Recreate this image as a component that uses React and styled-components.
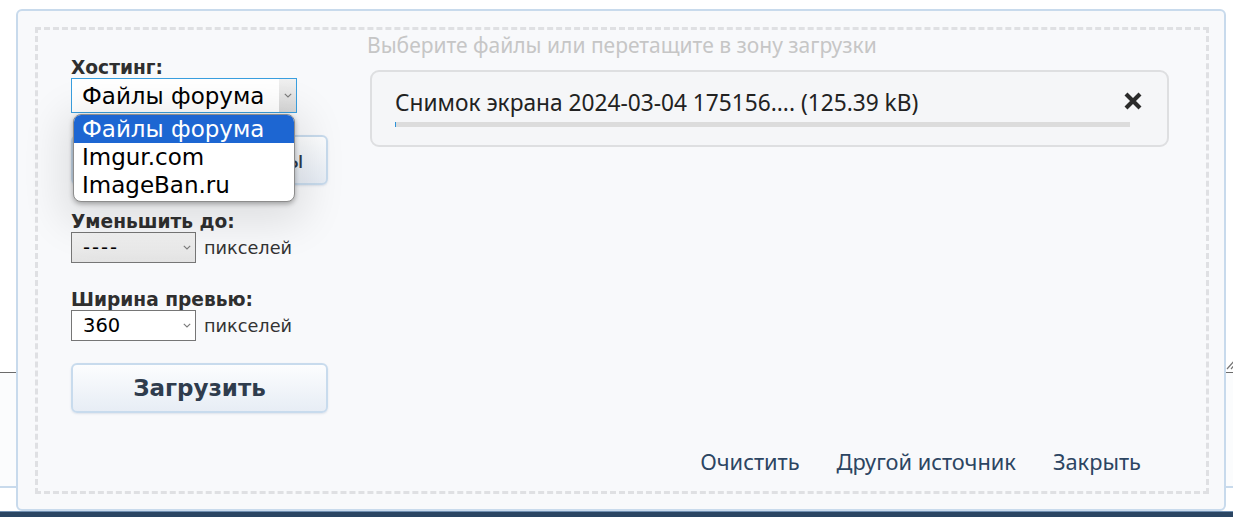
import React from "react";
import styled, { createGlobalStyle, css } from "styled-components";

const GlobalStyle = createGlobalStyle`
  html, body { margin: 0; padding: 0; background: #ffffff; }
  body { font-family: "DejaVu Sans", Verdana, sans-serif; }
  * { box-sizing: border-box; }
`;

const Screen = styled.div`
  position: relative;
  width: 1233px;
  height: 517px;
  overflow: hidden;
  background: #ffffff;
`;

/* ---------- page behind the dialog ---------- */
const Backdrop = styled.div`
  display: flex;
  flex-direction: column;
  height: 100%;
`;

const PageTop = styled.div`
  flex: 0 0 372px;
  display: flex;
  justify-content: flex-end;
  align-items: flex-end;
  padding-bottom: 2px;
`;

const EditorStrip = styled.div`
  flex: 0 0 116px;
  border-top: 1px solid #6b6b6b;
  border-bottom: 2px solid #c8daec;
  background: #fbfcfd;
`;

const PageRest = styled.div`
  flex: 1;
`;

const BottomBar = styled.div`
  flex: 0 0 6px;
  border-top: 1px solid #6f8eb0;
  background: #2b4663;
`;

/* ---------- dialog ---------- */
const Dialog = styled.div`
  position: absolute;
  top: 9px;
  left: 16px;
  width: 1210px;
  height: 502px;
  border: 2px solid #c8daec;
  border-radius: 6px;
  background: #f8f9fb;
  padding: 16px 15px 15px 17px;
`;

const DropZone = styled.div`
  height: 100%;
  border: 3px dashed #dfe0e3;
  display: flex;
  flex-direction: column;
`;

const Columns = styled.div`
  display: flex;
  align-items: flex-start;
`;

const Sidebar = styled.div`
  width: 257px;
  margin-left: 33px;
  padding-top: 28px;
  display: flex;
  flex-direction: column;
`;

const Field = styled.div`
  display: flex;
  flex-direction: column;
  margin-top: ${(p) => (p.$first ? "0" : "27px")};
`;

const Label = styled.div`
  font-family: "DejaVu Sans", Verdana, sans-serif;
  font-weight: bold;
  font-size: 18.6px;
  line-height: 20px;
  color: #2f2f2f;
`;

const SelectWrap = styled.div`
  position: relative;
`;

const FakeSelect = styled.div`
  position: relative;
  width: ${(p) => (p.$wide ? "226px" : "125px")};
  height: ${(p) => (p.$wide ? "35px" : "31px")};
  border: 1px solid ${(p) => (p.$focused ? "#3a9fdf" : "#767676")};
  background: ${(p) =>
    p.$muted ? "linear-gradient(#f3f3f3, #e3e3e3)" : "#ffffff"};
  display: flex;
  align-items: center;
  padding-left: ${(p) => (p.$wide ? "10px" : "11px")};
  font-family: "DejaVu Sans", Verdana, sans-serif;
  font-size: ${(p) => (p.$wide ? "23px" : "19.5px")};
  color: #000;
  white-space: nowrap;
`;

const Placeholder = styled.span`
  letter-spacing: 2px;
`;

const ArrowBox = styled.div`
  margin-left: auto;
  align-self: stretch;
  width: ${(p) => (p.$boxed ? "17px" : "16px")};
  display: flex;
  align-items: center;
  justify-content: center;
  ${(p) =>
    p.$boxed &&
    css`
      background: linear-gradient(#f1f1f1, #d7d7d7);
    `}
`;

const Chevron = () => (
  <svg width="8" height="5" viewBox="0 0 8 5">
    <path d="M0.8 0.8 L4 4 L7.2 0.8" fill="none" stroke="#7a7a7a" strokeWidth="1.1" />
  </svg>
);

const OptionList = styled.div`
  position: absolute;
  top: 36px;
  left: 2px;
  width: 222px;
  border: 1px solid #8d8d8d;
  border-radius: 8px;
  background: #ffffff;
  overflow: hidden;
  padding-bottom: 2px;
  box-shadow: 0 10px 40px 12px rgba(0, 0, 0, 0.1), 0 2px 5px rgba(0, 0, 0, 0.3);
  z-index: 2;
`;

const Option = styled.div`
  height: 28px;
  line-height: 28px;
  padding-left: 8px;
  font-family: "DejaVu Sans", Verdana, sans-serif;
  font-size: 23px;
  white-space: nowrap;
  color: ${(p) => (p.$active ? "#ffffff" : "#000000")};
  background: ${(p) => (p.$active ? "#1d66d2" : "transparent")};
`;

const InlineRow = styled.div`
  display: flex;
  align-items: center;
`;

const Unit = styled.span`
  margin-left: 8px;
  font-family: "DejaVu Sans", Verdana, sans-serif;
  font-size: 17.7px;
  color: #333;
  padding-top: 1px;
`;

const ActionButton = styled.div`
  margin-top: 22px;
  width: 257px;
  height: 50px;
  border: 2px solid #c8dbed;
  border-radius: 6px;
  background: linear-gradient(#fcfdfe, #e7edf5);
  box-shadow: 0 1px 2px rgba(80, 110, 150, 0.15);
  display: flex;
  align-items: center;
  justify-content: center;
  font-family: "DejaVu Sans", Verdana, sans-serif;
  font-size: 23px;
  font-weight: ${(p) => (p.$bold ? "bold" : "normal")};
  color: #2f3c4d;
  white-space: nowrap;
`;

const Main = styled.div`
  margin-left: 39px;
  width: 802px;
  padding-top: 3px;
  display: flex;
  flex-direction: column;
`;

const Hint = styled.div`
  font-family: "Noto Sans", sans-serif;
  font-size: 21px;
  line-height: 24px;
  color: #c6c6c6;
  white-space: nowrap;
`;

const FileCard = styled.div`
  margin-top: 13px;
  margin-left: 3px;
  width: 799px;
  border: 2px solid #dedfe1;
  border-radius: 9px;
  background: #f5f6f8;
  padding: 18px 24px 18px 23px;
  display: flex;
  align-items: flex-start;
`;

const FileInfo = styled.div`
  flex: 1;
  display: flex;
  flex-direction: column;
`;

const FileName = styled.div`
  font-family: "Noto Sans", sans-serif;
  font-size: 22.7px;
  line-height: 26px;
  color: #222;
  white-space: nowrap;
`;

const Progress = styled.div`
  margin-top: 6px;
  height: 5px;
  background: #dcdcdc;
`;

const ProgressFill = styled.div`
  height: 100%;
  background: #2b93da;
`;

const CloseButton = styled.div`
  margin-left: -7px;
  margin-top: 1px;
  width: 20px;
  height: 20px;
  display: flex;
`;

const Footer = styled.div`
  margin-top: auto;
  display: flex;
  justify-content: flex-end;
  gap: 37px;
  padding: 0 65px 16px 0;
`;

const FooterLink = styled.span`
  font-family: "Noto Sans", sans-serif;
  font-size: 21.8px;
  line-height: 26px;
  color: #2c4562;
  white-space: nowrap;
`;

export default function App() {
  const progress = 0.15;
  return (
    <>
      <GlobalStyle />
      <Screen>
        <Backdrop>
          <PageTop>
            <svg width="10" height="14" viewBox="0 0 10 14" style={{ marginRight: -3 }}>
              <path d="M1 13 L9 4 M5 13 L9 8.5" stroke="#777" strokeWidth="1.2" />
            </svg>
          </PageTop>
          <EditorStrip />
          <PageRest />
          <BottomBar />
        </Backdrop>

        <Dialog>
          <DropZone>
            <Columns>
              <Sidebar>
                <Field $first>
                  <Label>Хостинг:</Label>
                  <SelectWrap>
                    <FakeSelect $wide $focused>
                      Файлы форума
                      <ArrowBox $boxed>
                        <Chevron />
                      </ArrowBox>
                    </FakeSelect>
                    <OptionList>
                      <Option $active>Файлы форума</Option>
                      <Option>Imgur.com</Option>
                      <Option>ImageBan.ru</Option>
                    </OptionList>
                  </SelectWrap>
                </Field>
                <ActionButton>Выберите файлы</ActionButton>
                <Field>
                  <Label>Уменьшить до:</Label>
                  <InlineRow>
                    <FakeSelect $muted>
                      <Placeholder>----</Placeholder>
                      <ArrowBox>
                        <Chevron />
                      </ArrowBox>
                    </FakeSelect>
                    <Unit>пикселей</Unit>
                  </InlineRow>
                </Field>
                <Field>
                  <Label>Ширина превью:</Label>
                  <InlineRow>
                    <FakeSelect>
                      360
                      <ArrowBox>
                        <Chevron />
                      </ArrowBox>
                    </FakeSelect>
                    <Unit>пикселей</Unit>
                  </InlineRow>
                </Field>
                <ActionButton $bold>Загрузить</ActionButton>
              </Sidebar>

              <Main>
                <Hint>Выберите файлы или перетащите в зону загрузки</Hint>
                <FileCard>
                  <FileInfo>
                    <FileName>Снимок экрана 2024-03-04 175156.... (125.39 kB)</FileName>
                    <Progress>
                      <ProgressFill style={{ width: `${progress}%` }} />
                    </Progress>
                  </FileInfo>
                  <CloseButton>
                    <svg width="20" height="20" viewBox="0 0 20 20">
                      <path d="M3 3 L17 17 M17 3 L3 17" stroke="#2b2b2b" strokeWidth="4.2" />
                    </svg>
                  </CloseButton>
                </FileCard>
              </Main>
            </Columns>

            <Footer>
              <FooterLink>Очистить</FooterLink>
              <FooterLink>Другой источник</FooterLink>
              <FooterLink>Закрыть</FooterLink>
            </Footer>
          </DropZone>
        </Dialog>
      </Screen>
    </>
  );
}
